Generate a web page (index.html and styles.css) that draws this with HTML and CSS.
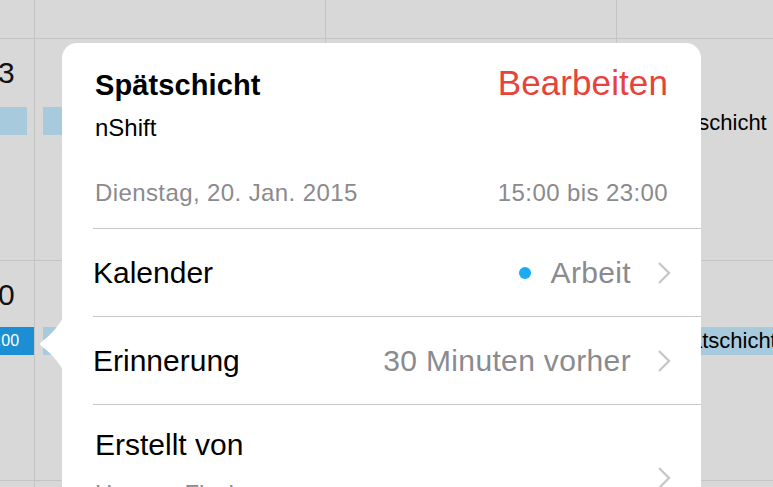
FILE: index.html
```html
<!DOCTYPE html>
<html lang="de">
<head>
<meta charset="utf-8">
<title>Spätschicht</title>
<link rel="stylesheet" href="styles.css">
</head>
<body>
<div class="calendar">
  <div class="cell head c0"></div>
  <div class="cell head c1"></div>
  <div class="cell head c2"></div>
  <div class="cell head c3"></div>

  <div class="cell c0 r1">
    <div class="daynum">3</div>
    <div class="bar light bar-left"></div>
  </div>
  <div class="cell c1 r1">
    <div class="bar light bar-mid"></div>
  </div>
  <div class="cell c2 r1"></div>
  <div class="cell c3 r1">
    <div class="evtext">Spätschicht</div>
  </div>

  <div class="cell c0 r2">
    <div class="daynum">0</div>
    <div class="bar dark bar-left-dark">15:00</div>
  </div>
  <div class="cell c1 r2">
    <div class="bar light bar-mid2"></div>
  </div>
  <div class="cell c2 r2"></div>
  <div class="cell c3 r2">
    <div class="bar light bar-right">Spätschicht</div>
  </div>

  <div class="cell c0 r3"></div>
  <div class="cell c1 r3"></div>
  <div class="cell c2 r3"></div>
  <div class="cell c3 r3"></div>
</div>

<div class="popover">
  <svg class="arrow" width="26" height="56" viewBox="0 0 26 56" aria-hidden="true">
    <path d="M26 0 C22 8 14 18 4 25.5 Q0 28 4 30.5 C14 38 22 48 26 56 Z" fill="#ffffff"/>
  </svg>
  <div class="head-row">
    <div class="title">Spätschicht</div>
    <div class="edit">Bearbeiten</div>
  </div>
  <div class="sub">nShift</div>
  <div class="date-row">
    <span>Dienstag, 20. Jan. 2015</span>
    <span>15:00 bis 23:00</span>
  </div>
  <div class="list">
    <div class="row">
      <span class="label">Kalender</span>
      <span class="value"><span class="dot"></span>Arbeit</span>
      <svg class="chev" width="14" height="24" viewBox="0 0 14 24"><path d="M2 2 L12 12 L2 22" fill="none" stroke="#c7c7cc" stroke-width="2.4"/></svg>
    </div>
    <div class="row">
      <span class="label">Erinnerung</span>
      <span class="value">30 Minuten vorher</span>
      <svg class="chev" width="14" height="24" viewBox="0 0 14 24"><path d="M2 2 L12 12 L2 22" fill="none" stroke="#c7c7cc" stroke-width="2.4"/></svg>
    </div>
    <div class="row tall">
      <div class="stack">
        <span class="label">Erstellt von</span>
        <span class="meta">Hannes Fischer</span>
      </div>
      <svg class="chev chev-low" width="14" height="24" viewBox="0 0 14 24"><path d="M2 2 L12 12 L2 22" fill="none" stroke="#c7c7cc" stroke-width="2.4"/></svg>
    </div>
  </div>
</div>
</body>
</html>
```

FILE: styles.css
```css
* { box-sizing: border-box; }
html, body {
  margin: 0;
  padding: 0;
  width: 773px;
  height: 487px;
  overflow: hidden;
  background: #d8d8d8;
  font-family: "Liberation Sans", Arial, sans-serif;
}

.calendar {
  display: grid;
  grid-template-columns: 35px 291px 291px 156px;
  grid-template-rows: 39px 222px 220px 40px;
  width: 773px;
  height: 521px;
}
.cell {
  border-right: 1px solid #c4c4c4;
  border-bottom: 1px solid #c4c4c4;
  position: relative;
  overflow: hidden;
}
.c3 { border-right: none; }

.daynum {
  font-size: 30px;
  color: #111;
  line-height: 30px;
  margin-top: 19px;
  margin-left: -2px;
}

.bar {
  height: 28px;
  background: #a8cadd;
}
.bar-left {
  margin-top: 19px;
  width: 27px;
}
.bar-mid {
  margin-top: 68px;
  margin-left: 8px;
  width: 60px;
}
.bar-left-dark {
  margin-top: 17px;
  width: 35px;
  background: #1c8fd4;
  color: #fff;
  font-size: 16px;
  line-height: 28px;
  text-indent: -21px;
  overflow: hidden;
  white-space: nowrap;
}
.bar-mid2 {
  margin-top: 66px;
  margin-left: 8px;
  width: 60px;
}
.evtext {
  margin-top: 70px;
  margin-left: 36px;
  font-size: 22px;
  line-height: 28px;
  color: #000;
  white-space: nowrap;
}
.bar-right {
  margin-top: 66px;
  width: 156px;
  font-size: 22px;
  line-height: 28px;
  color: #000;
  white-space: nowrap;
  padding-left: 46px;
}

.popover {
  position: absolute;
  left: 62px;
  top: 43px;
  width: 639px;
  height: 500px;
  background: #fff;
  border-radius: 15px;
  padding: 23px 33px 0 31px;
}
.arrow {
  position: absolute;
  left: -24px;
  top: 273px;
}

.head-row {
  display: flex;
  justify-content: space-between;
  align-items: baseline;
  height: 34px;
  padding-left: 2px;
}
.title {
  font-size: 29px;
  font-weight: 700;
  color: #000;
  letter-spacing: 0.1px;
  line-height: 34px;
}
.edit {
  font-size: 35px;
  color: #e6433b;
  line-height: 34px;
  letter-spacing: 0.1px;
}
.sub {
  margin-top: 14px;
  padding-left: 2px;
  font-size: 24px;
  line-height: 28px;
  color: #000;
}
.date-row {
  margin-top: 37px;
  padding-left: 2px;
  display: flex;
  justify-content: space-between;
  font-size: 24px;
  line-height: 28px;
  color: #8a8a8f;
  letter-spacing: 0.4px;
}
.list {
  margin-top: 21px;
  margin-right: -33px;
  border-top: 1px solid #c8c7cc;
}
.row {
  display: flex;
  align-items: center;
  height: 88px;
  border-bottom: 1px solid #c8c7cc;
  padding-right: 30px;
}
.row.tall {
  height: 160px;
  align-items: flex-start;
  border-bottom: none;
}
.label {
  font-size: 30px;
  line-height: 36px;
  color: #000;
  flex: 1;
}
.value {
  font-size: 30px;
  line-height: 36px;
  color: #8a8a8f;
  letter-spacing: 0.35px;
  display: flex;
  align-items: center;
}
.dot {
  width: 12px;
  height: 12px;
  border-radius: 50%;
  background: #1aabf5;
  margin-right: 20px;
}
.chev {
  margin-left: 26px;
}
.stack {
  flex: 1;
  display: flex;
  flex-direction: column;
  padding-top: 22px;
  padding-left: 2px;
}
.meta {
  font-size: 24px;
  line-height: 28px;
  margin-top: 17px;
  color: #8a8a8f;
}
.chev-low {
  margin-top: 61px;
}
```
